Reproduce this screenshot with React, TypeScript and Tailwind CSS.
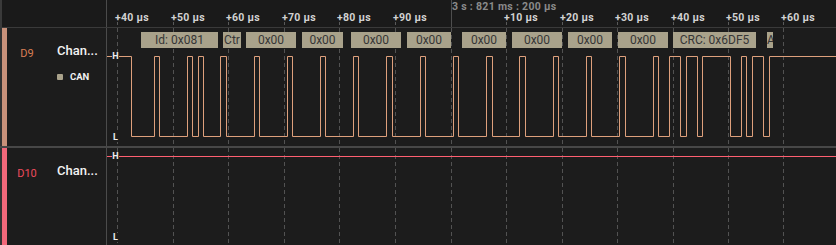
import React from 'react'

// timeline geometry (page px)
const TRACK_X = 107
const TRACK_W = 729
const ticks = [117, 173, 228, 284, 339, 395, 451, 506, 562, 617, 673, 728, 783]
const tickLabels = ['+40 µs', '+50 µs', '+60 µs', '+70 µs', '+80 µs', '+90 µs', '', '+10 µs', '+20 µs', '+30 µs', '+40 µs', '+50 µs', '+60 µs']

// CAN frame edges on D9, starting high
const d9Edges = [
  131, 154, 159, 187, 192, 198, 203, 220, 226, 254, 259, 287, 292, 320, 325, 353, 358, 386, 392, 420, 425, 453, 458,
  486, 492, 519, 525, 553, 558, 586, 591, 619, 625, 653, 658, 669, 680, 686, 697, 702, 730, 741, 746, 752, 763, 769,
]

const frames = [
  { x0: 141, x1: 218, text: 'Id: 0x081' },
  { x0: 223, x1: 241, text: 'Ctr' },
  { x0: 246, x1: 296, text: '0x00' },
  { x0: 302, x1: 343, text: '0x00' },
  { x0: 351, x1: 401, text: '0x00' },
  { x0: 407, x1: 451, text: '0x00' },
  { x0: 462, x1: 506, text: '0x00' },
  { x0: 512, x1: 562, text: '0x00' },
  { x0: 568, x1: 612, text: '0x00' },
  { x0: 618, x1: 668, text: '0x00' },
  { x0: 673, x1: 756, text: 'CRC: 0x6DF5' },
  { x0: 767, x1: 773, text: 'A', clip: true },
]

function wavePath(edges: number[], hi: number, lo: number) {
  let d = `M${TRACK_X},${hi}`
  let high = true
  for (const e of edges) {
    d += ` H${e + 0.5} V${high ? lo : hi}`
    high = !high
  }
  return d + ` H${TRACK_X + TRACK_W}`
}

function Ruler() {
  return (
    <div className="flex h-[28px] border-b border-[#3a3a3a] bg-[#1a1a1a]">
      <div className="w-[106px] border-l-2 border-[#3a3a3a]" />
      <div className="w-px bg-[#4b4b4b]" />
      <div className="relative flex-1 overflow-hidden">
        <svg className="absolute inset-0" width={TRACK_W} height={27} viewBox={`${TRACK_X} 0 ${TRACK_W} 27`}>
          {ticks.map((x, i) =>
            tickLabels[i] ? (
              <line key={x} x1={x + 0.5} x2={x + 0.5} y1={22} y2={27} stroke="#5a5a5a" strokeDasharray="3 2" />
            ) : (
              <line key={x} x1={x + 0.5} x2={x + 0.5} y1={0} y2={27} stroke="#4e4e4e" />
            )
          )}
        </svg>
        <div className="absolute left-[345px] top-[2px] whitespace-nowrap text-[10.5px] font-bold leading-none tracking-[0.3px] text-[#8a8a8a]">
          3 s : 821 ms : 200 µs
        </div>
        {ticks.map((x, i) =>
          tickLabels[i] ? (
            <div
              key={'l' + x}
              style={{ left: x - TRACK_X - 2 }}
              className="absolute top-[13px] whitespace-nowrap text-[10.5px] font-bold leading-none tracking-[0.3px] text-[#d2d2d2]"
            >
              {tickLabels[i]}
            </div>
          ) : null
        )}
      </div>
    </div>
  )
}

function LevelTag({ top, children }: { top: number; children: React.ReactNode }) {
  return (
    <div
      style={{ top }}
      className="absolute left-[5px] flex h-[9px] w-[7px] items-center justify-center bg-[#1c1c1c] text-[9px] font-bold leading-none text-[#eeeeee]"
    >
      {children}
    </div>
  )
}

function Grid({ h, y0 }: { h: number; y0: number }) {
  return (
    <>
      {ticks.map((x) => (
        <line key={x} x1={x + 0.5} x2={x + 0.5} y1={y0} y2={y0 + h} stroke="#525252" strokeDasharray="4 3" />
      ))}
    </>
  )
}

function ChannelRow({
  id,
  bar,
  idColor,
  hi,
  lo,
  children,
  decoder,
}: {
  id: string
  bar: string
  idColor: string
  hi: number
  lo: number
  children?: React.ReactNode
  decoder?: boolean
}) {
  return (
    <div className="flex h-[118px]">
      <div className="w-[2px] bg-[#333333]" />
      <div className={`w-[5px] ${bar}`} />
      <div className="w-[99px] bg-[#1c1c1c]">
        <div className="flex pt-[16px]">
          <div className={`mt-[4px] w-[40px] text-center text-[11px] leading-none ${idColor}`}>{id}</div>
          <div className="ml-[10px]">
            <div className="text-[13px] font-medium leading-none text-[#f2f2f2]">Chan...</div>
            {decoder && (
              <div className="mt-[15px] flex items-center gap-[7px]">
                <div className="h-[6px] w-[6px] rounded-[1px] bg-[#a9a28b]" />
                <div className="text-[9.5px] font-bold leading-none text-[#f2f2f2]">CAN</div>
              </div>
            )}
          </div>
        </div>
      </div>
      <div className="w-px bg-[#4b4b4b]" />
      <div className="relative flex-1 overflow-hidden bg-[#1c1c1c]">
        <svg className="absolute inset-0" width={TRACK_W} height={118} viewBox={`${TRACK_X} 0 ${TRACK_W} 118`}>
          <Grid h={118} y0={0} />
          {children}
        </svg>
        {decoder &&
          frames.map((f) => (
            <div
              key={f.x0}
              style={{ left: f.x0 - TRACK_X, width: f.x1 - f.x0 }}
              className={`absolute top-[4px] flex h-[16px] items-center overflow-hidden bg-[#a9a28b] text-[12px] leading-none text-[#363636] ${
                f.clip ? 'justify-start' : 'justify-center'
              }`}
            >
              {f.text}
            </div>
          ))}
        <LevelTag top={hi - 4}>H</LevelTag>
        <LevelTag top={lo - 4}>L</LevelTag>
      </div>
    </div>
  )
}

export default function App() {
  return (
    <div className="h-[245px] w-[836px] overflow-hidden bg-[#1c1c1c] font-['Roboto',sans-serif]">
      <Ruler />
      <ChannelRow id="D9" bar="bg-[#c8917a]" idColor="text-[#d97f55]" hi={28} lo={109} decoder>
        <path d={wavePath(d9Edges, 28.5, 108.5)} fill="none" stroke="#dea07c" strokeWidth={1} />
      </ChannelRow>
      <div className="h-[2px] bg-[#474747]" />
      <ChannelRow id="D10" bar="bg-[#f2687a]" idColor="text-[#ec4b5c]" hi={8} lo={89}>
        <line x1={TRACK_X} x2={TRACK_X + TRACK_W} y1={8.5} y2={8.5} stroke="#ff5f70" />
      </ChannelRow>
    </div>
  )
}
